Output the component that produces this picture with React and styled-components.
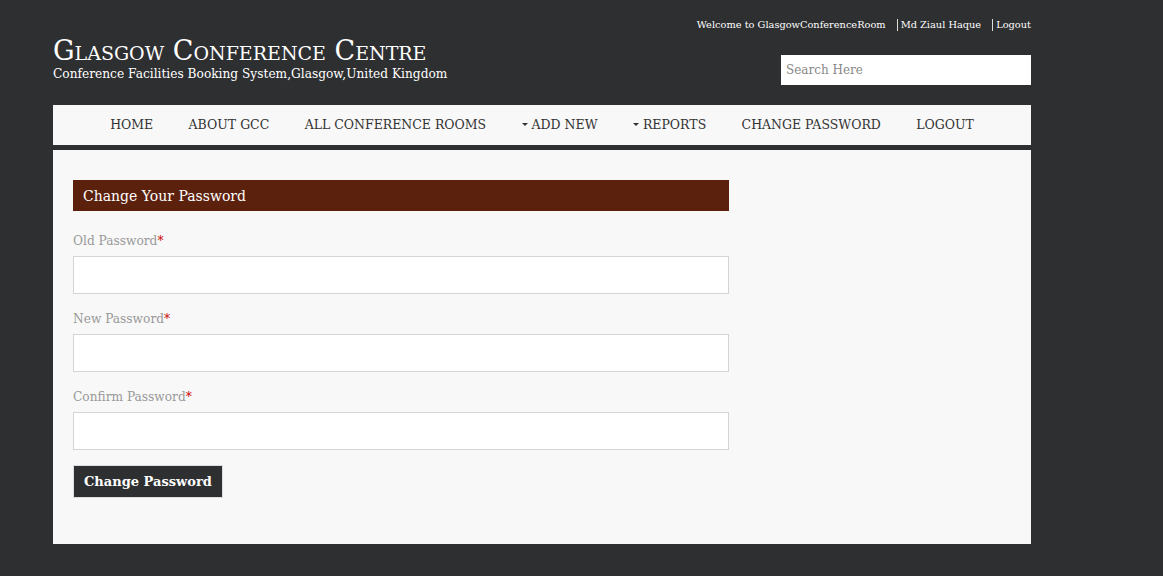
import React from "react";
import styled, { createGlobalStyle } from "styled-components";

const Global = createGlobalStyle`
  html, body { margin: 0; padding: 0; background: #2e2f31; }
  body { font-family: "DejaVu Serif", Georgia, serif; }
  * { box-sizing: border-box; }
`;

const Page = styled.div`
  width: 978px;
  margin-left: 53px;
  padding-top: 19px;
`;

const Header = styled.header`
  display: flex;
  justify-content: space-between;
  align-items: flex-start;
  height: 86px;
`;

const Brand = styled.div`
  display: flex;
  flex-direction: column;
  padding-top: 16px;
`;

const Title = styled.h1`
  margin: 0;
  font-size: 27px;
  font-weight: normal;
  font-variant: small-caps;
  color: #fff;
  line-height: 31px;
`;

const Subtitle = styled.div`
  font-size: 12.2px;
  color: #fff;
  line-height: 16px;
`;

const Right = styled.div`
  display: flex;
  flex-direction: column;
  align-items: flex-end;
`;

const TopLinks = styled.div`
  display: flex;
  font-size: 9.8px;
  line-height: 12px;
  color: #fff;
`;

const TopLink = styled.span`
  margin-left: ${(p) => (p.$first ? 0 : "11px")};
  padding-left: ${(p) => (p.$first ? 0 : "3px")};
  border-left: ${(p) => (p.$first ? "none" : "1px solid #ddd")};
  line-height: 12px;
`;

const Search = styled.input`
  margin-top: 24px;
  width: 250px;
  height: 30px;
  border: none;
  outline: none;
  padding: 0 5px;
  font-family: inherit;
  font-size: 12px;
  background: #fff;
  &::placeholder { color: #888; }
`;

const Nav = styled.nav`
  display: flex;
  justify-content: center;
  align-items: center;
  height: 40px;
  background: #f8f8f8;
  border-bottom: 5px solid #2e2f31;
  box-sizing: content-box;
`;

const NavItem = styled.a`
  padding: 0 17.7px;
  font-size: 12.5px;
  color: #333;
  text-transform: uppercase;
  text-decoration: none;
  display: flex;
  align-items: center;
  margin-top: -1px;
`;

const Caret = styled.span`
  display: inline-block;
  width: 0;
  height: 0;
  border-left: 3px solid transparent;
  border-right: 3px solid transparent;
  border-top: 3px solid #333;
  margin-right: 4px;
`;

const Panel = styled.main`
  background: #f8f8f8;
  padding: 30px 20px 46px 20px;
  height: 394px;
`;

const Form = styled.form`
  width: 656px;
  display: flex;
  flex-direction: column;
`;

const FormHeader = styled.div`
  background: #5c210d;
  color: #fff;
  height: 31px;
  padding: 0 10px;
  font-size: 14px;
  display: flex;
  align-items: center;
  margin-bottom: 21px;
`;

const Label = styled.label`
  font-size: 12.2px;
  color: #999;
  line-height: 18px;
  margin-bottom: 6px;
`;

const Req = styled.span`
  color: #c00;
`;

const Input = styled.input`
  height: 38px;
  width: 100%;
  border: 1px solid #d4d4d4;
  background: #fff;
  margin-bottom: 16px;
  font-family: inherit;
  font-size: 14px;
  padding: 0 8px;
`;

const Button = styled.button`
  align-self: flex-start;
  margin-top: -1px;
  height: 33px;
  padding: 0 10px;
  background: #2e2f31;
  color: #fff;
  font-family: inherit;
  font-weight: bold;
  font-size: 13px;
  border: 1px solid #ddd;
  cursor: pointer;
`;

const fields = ["Old Password", "New Password", "Confirm Password"];
const navItems = [
  { t: "Home" },
  { t: "About GCC" },
  { t: "All Conference Rooms" },
  { t: "Add New", caret: true },
  { t: "Reports", caret: true },
  { t: "Change Password" },
  { t: "Logout" },
];

export default function App() {
  return (
    <>
      <Global />
      <Page>
        <Header>
          <Brand>
            <Title>Glasgow Conference Centre</Title>
            <Subtitle>Conference Facilities Booking System,Glasgow,United Kingdom</Subtitle>
          </Brand>
          <Right>
            <TopLinks>
              <TopLink $first>Welcome to GlasgowConferenceRoom</TopLink>
              <TopLink>Md Ziaul Haque</TopLink>
              <TopLink>Logout</TopLink>
            </TopLinks>
            <Search placeholder="Search Here" />
          </Right>
        </Header>
        <Nav>
          {navItems.map((n) => (
            <NavItem key={n.t} href="#">
              {n.caret && <Caret />}
              {n.t}
            </NavItem>
          ))}
        </Nav>
        <Panel>
          <Form onSubmit={(e) => e.preventDefault()}>
            <FormHeader>Change Your Password</FormHeader>
            {fields.map((f) => (
              <React.Fragment key={f}>
                <Label>
                  {f}
                  <Req>*</Req>
                </Label>
                <Input type="password" />
              </React.Fragment>
            ))}
            <Button type="submit">Change Password</Button>
          </Form>
        </Panel>
      </Page>
    </>
  );
}
